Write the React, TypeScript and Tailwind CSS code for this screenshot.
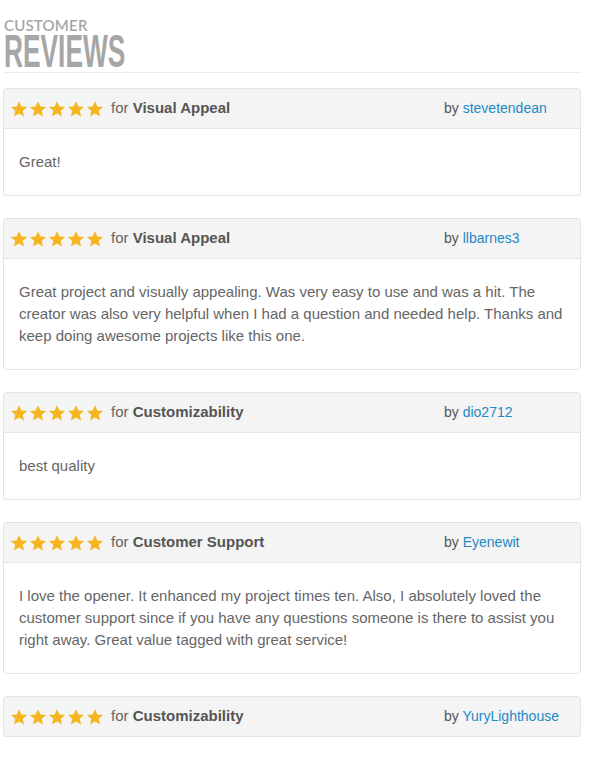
const reviews = [
  { aspect: "Visual Appeal", user: "stevetendean", text: "Great!" },
  {
    aspect: "Visual Appeal",
    user: "llbarnes3",
    text: "Great project and visually appealing. Was very easy to use and was a hit. The creator was also very helpful when I had a question and needed help. Thanks and keep doing awesome projects like this one.",
  },
  { aspect: "Customizability", user: "dio2712", text: "best quality" },
  {
    aspect: "Customer Support",
    user: "Eyenewit",
    text: "I love the opener. It enhanced my project times ten. Also, I absolutely loved the customer support since if you have any questions someone is there to assist you right away. Great value tagged with great service!",
  },
  { aspect: "Customizability", user: "YuryLighthouse", text: "" },
];

const Star = () => (
  <svg viewBox="0 0 24 24" className="w-[18px] h-[18px]" fill="#f6b622">
    <path d="M12 1.5l3.2 7.1 7.6.7-5.8 5.1 1.7 7.6L12 18l-6.7 4 1.7-7.6L1.2 9.3l7.6-.7z" />
  </svg>
);

const ReviewCard = ({ aspect, user, text }: { aspect: string; user: string; text: string }) => (
  <div className="border border-[#e3e3e3] rounded-[3px] bg-white overflow-hidden">
    <div className="h-[39px] bg-[#f4f4f4] flex items-center pl-[6px]">
      <div className="flex items-center gap-px">
        {[0, 1, 2, 3, 4].map((i) => (
          <Star key={i} />
        ))}
      </div>
      <div className="ml-[7px] flex-1 text-[15px] text-[#666]">
        for <span className="font-bold text-[#555]">{aspect}</span>
      </div>
      <div className="w-[136px] text-[14px] text-[#555]">
        by <span className="text-[#1e8ac6]">{user}</span>
      </div>
    </div>
    {text && (
      <div className="border-t border-[#e8e8e8] px-[15px] py-[22px] text-[15px] leading-[22px] text-[#666]">
        {text}
      </div>
    )}
  </div>
);

export default function App() {
  return (
    <div className="w-[610px] min-h-[760px] bg-white pt-[19px] pl-[3px] pr-[29px] font-['Liberation_Sans',Arial,sans-serif]">
      <div className="pl-px">
        <div className="font-['Lato',sans-serif] text-[15px] leading-[12px] font-semibold text-[#a6a6a6] tracking-[0.2px]">
          CUSTOMER
        </div>
        <div className="mt-[3px] h-[34px]">
          <div className="origin-left scale-x-[0.56] font-['Liberation_Sans',sans-serif] font-bold text-[47px] leading-[34px] text-[#a6a6a6] whitespace-nowrap">
            REVIEWS
          </div>
        </div>
      </div>
      <div className="mt-[4px] ml-px border-t border-[#ececec]" />
      <div className="mt-[15px] flex flex-col gap-[22px]">
        {reviews.map((r, i) => (
          <ReviewCard key={i} {...r} />
        ))}
      </div>
    </div>
  );
}
